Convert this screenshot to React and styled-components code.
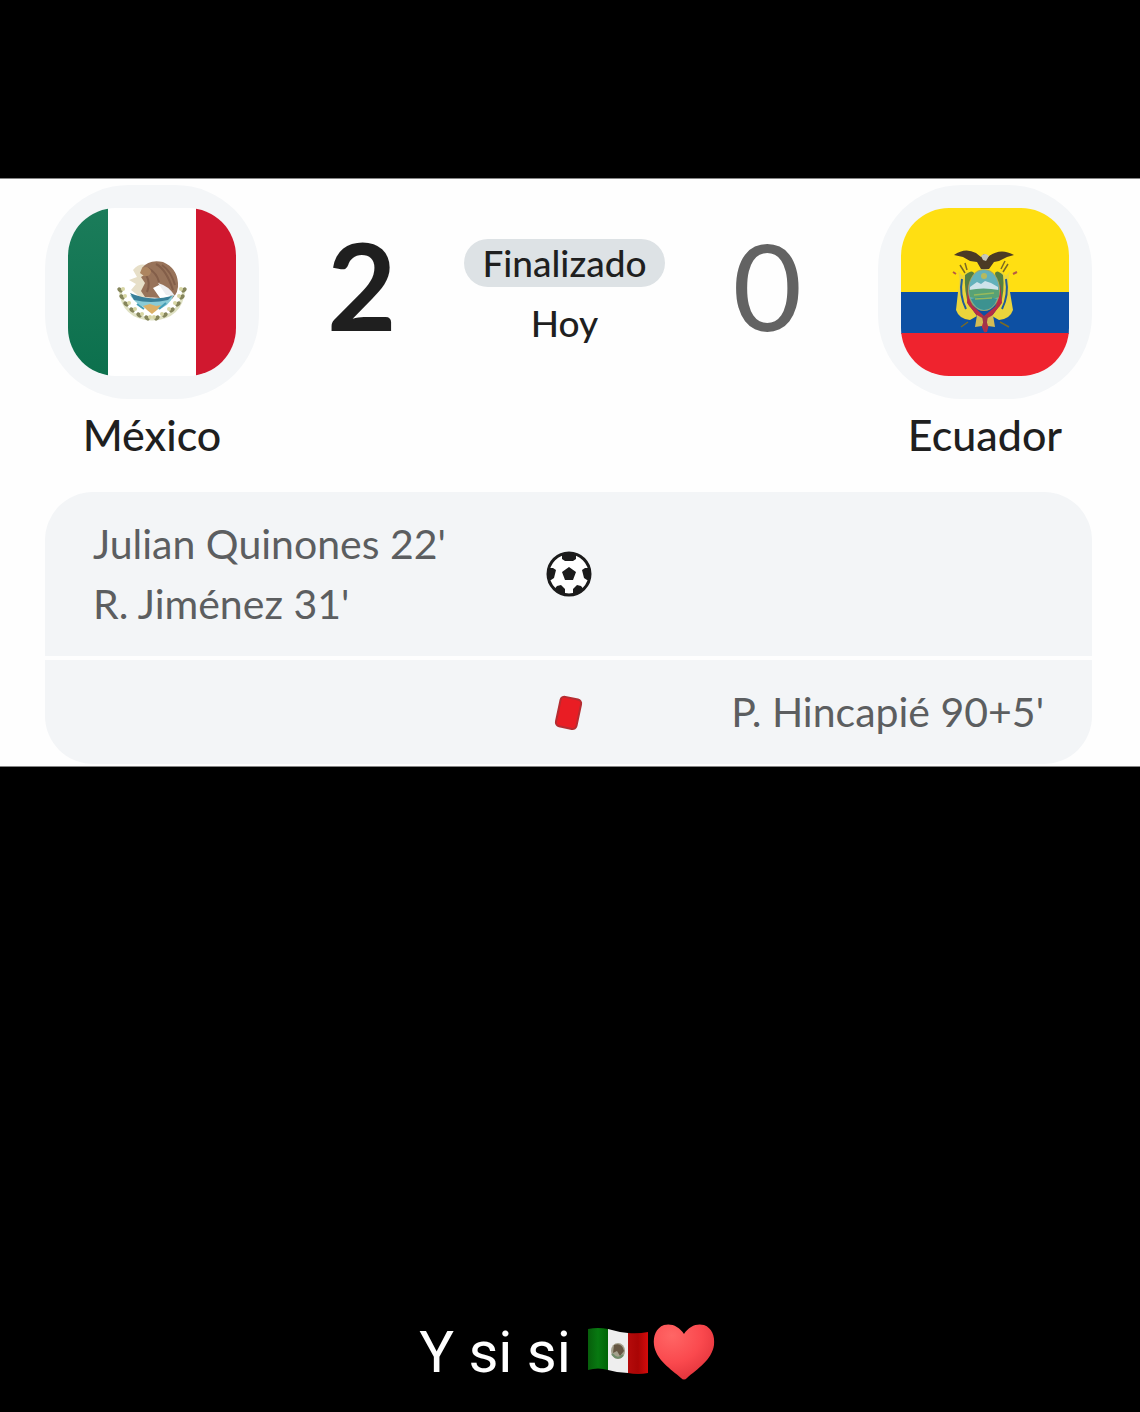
import React from "react";
import styled, { createGlobalStyle } from "styled-components";

const GlobalStyle = createGlobalStyle`
  * { box-sizing: border-box; }
  body { margin: 0; background: #000; }
`;

const Page = styled.main`
  min-height: 100vh;
  display: flex;
  flex-direction: column;
  justify-content: space-between;
  padding: 178px 0 26px;
  background: #000;
  font-family: Lato, "Open Sans", sans-serif;
`;

const Panel = styled.article`
  padding: 6px 48px 2px 45px;
  background: #fefefe;
  border: solid #858585;
  border-width: 1px 0;
`;

const Scoreboard = styled.header`
  display: flex;
  align-items: flex-start;
`;

const Team = styled.section`
  width: 214px;
  display: flex;
  flex-direction: column;
  align-items: center;
`;

const Badge = styled.div`
  width: 214px;
  height: 214px;
  padding: 23px;
  border-radius: 84px;
  background: #f4f6f8;
  svg {
    display: block;
    width: 168px;
    height: 168px;
    border-radius: 48px;
  }
`;

const TeamName = styled.h2`
  margin: 8px 0 0;
  font-size: 43px;
  line-height: 56px;
  font-weight: 500;
  color: #1f1f1f;
`;

const Result = styled.div`
  flex: 1;
  display: flex;
  justify-content: space-between;
  align-items: flex-start;
  padding: 46px 76px 0 68px;
`;

const Score = styled.span`
  font-size: 120px;
  line-height: 108px;
  font-weight: ${(p) => (p.$winner ? 700 : 400)};
  color: ${(p) => (p.$winner ? "#1f1f1f" : "#636363")};
`;

const Status = styled.div`
  display: flex;
  flex-direction: column;
  align-items: center;
  gap: 12px;
  padding-top: 8px;
  font-size: 37px;
  line-height: 48px;
  font-weight: 500;
  color: #1f1f1f;
`;

const Pill = styled.span`
  padding: 0 18px;
  border-radius: 24px;
  background: #dde2e5;
`;

const Events = styled.div`
  display: flex;
  flex-direction: column;
  gap: 4px;
  margin-top: 29px;
  border-radius: 48px;
  overflow: hidden;
`;

const EventRow = styled.section`
  display: grid;
  grid-template-columns: 1fr 46px 1fr;
  align-items: center;
  padding: 22px 48px;
  background: #f3f5f7;
`;

const EventList = styled.ul`
  margin: 0;
  padding: 0;
  list-style: none;
  font-size: 41px;
  line-height: 60px;
  color: #5c5e60;
  text-align: ${(p) => (p.$away ? "right" : "left")};
`;

const EventIcon = styled.svg`
  display: block;
  width: 46px;
  height: 46px;
`;

const Caption = styled.p`
  display: flex;
  justify-content: center;
  align-items: center;
  margin: 0;
  padding-right: 6px;
  font-family: Roboto, sans-serif;
  font-size: 58px;
  line-height: 68px;
  color: #fff;
`;

const Emoji = styled.svg`
  width: 62px;
  height: 58px;
  margin-left: ${(p) => (p.$spaced ? 16 : 4)}px;
`;

const leaves = [
  [52, 82], [54, 89], [58, 96], [64, 102], [71, 107], [79, 110],
  [89, 110], [97, 107], [104, 102], [110, 96], [114, 89], [116, 82],
];

function MexicoFlag() {
  return (
    <svg viewBox="0 0 168 168" role="img" aria-label="Bandera de México">
      <defs>
        <linearGradient id="green" x2="0" y2="1">
          <stop offset="0" stopColor="#1b7c5a" />
          <stop offset="1" stopColor="#0c704d" />
        </linearGradient>
      </defs>
      <rect width="168" height="168" fill="#fff" />
      <rect width="40" height="168" fill="url(#green)" />
      <rect x="128" width="40" height="168" fill="#d0182f" />
      <path d="M52 81Q55 110 84 111Q113 110 116 81" fill="none" stroke="#dfe1c4" strokeWidth="3" />
      {leaves.map(([x, y]) => (
        <g key={x}>
          <ellipse cx={x} cy={y} rx="3" ry="2" fill="#85855b" transform={`rotate(${x < 84 ? 42 : -42} ${x} ${y})`} />
          <circle cx={x + (x < 84 ? 3 : -3)} cy={y - 1} r="2" fill="#d7d6a5" />
        </g>
      ))}
      <path d="M65 62Q71 55 78 57L75 66L82 69L76 81L84 90L72 89L63 82L68 76L61 72L69 69Z" fill="#e7dfc8" />
      <path d="M74 60Q81 51 95 54Q109 60 110 75Q111 84 104 91Q101 82 91 77L85 80L92 90L77 89L73 83L77 75L73 69L78 66Z" fill="#98735a" />
      <path d="M88 56Q98 61 105 82M94 57Q103 63 107 77M80 60Q89 65 91 74M78 67Q83 75 79 84" fill="none" stroke="#835e49" strokeWidth="2" />
      <path d="M74 60Q80 57 83 63Q83 69 76 68L72 65Z" fill="#ad8560" />
      <path d="M90 75Q101 78 107 88L98 87Z" fill="#eeeef0" />
      <path d="M62 87Q84 96 106 87Q101 99 88 102Q71 101 62 87Z" fill="#8acbd6" />
      <path d="M62 85Q82 94 104 88L100 92Q83 96 66 92Z" fill="#397f98" />
      <path d="M75 98L82 96L88 98L93 97L89 102L84 106L79 102Z" fill="#dbb068" />
      <path d="M69 96L76 101M98 95L91 101" stroke="#459eb6" strokeWidth="2" />
    </svg>
  );
}

function EcuadorFlag() {
  return (
    <svg viewBox="0 0 168 168" role="img" aria-label="Bandera de Ecuador">
      <rect width="168" height="84" fill="#ffdf12" />
      <rect y="84" width="168" height="42" fill="#0d50a3" />
      <rect y="125" width="168" height="43" fill="#ef232e" />
      <path d="M64 65L59 57M66 62L64 55M102 64L107 56M100 61L104 53M67 114L60 119M99 114L108 119" stroke="#7b6a24" strokeWidth="1.5" />
      <path d="M55 66L52 64M112 66L116 64" stroke="#b75c43" strokeWidth="2" />
      <path d="M57 63Q60 71 57 84L55 102Q58 111 69 112L76 108L69 98L65 74L68 62L62 68Z" fill="#ead43c" />
      <path d="M109 63Q106 71 109 84L112 102Q109 111 98 112L91 108L98 98L102 74L99 62L105 68Z" fill="#ead43c" />
      <path d="M61 71Q58 87 65 101M105 71Q108 87 101 101" fill="none" stroke="#235b97" strokeWidth="2" />
      <path d="M64 67Q71 61 73 65L70 91L75 104L68 98Q63 84 64 67M102 67Q96 61 94 65L97 91L92 104L99 98Q104 84 102 67" fill="#557f42" />
      <path d="M67 75L66 95L77 109L83 124H86L90 109L101 95L99 75L95 98L83 108L71 97Z" fill="#b52d46" />
      <path d="M76 107L83 111L81 118L74 119L75 113ZM92 107L85 111L87 118L94 119L93 113Z" fill="#d3bc55" />
      <path d="M81 108L84 126L87 108Z" fill="#9e354b" />
      <path d="M53 47Q64 39 75 45L80 49L83 46L87 49Q99 39 113 47L106 49L98 53L93 54L88 61L80 61L76 54L69 53L62 49Z" fill="#4b3a25" />
      <path d="M80 48Q84 44 88 48L85 53L82 52Z" fill="#c8c8ba" />
      <ellipse cx="83" cy="82" rx="16" ry="21" fill="#a6a563" />
      <ellipse cx="83" cy="82" rx="15" ry="20" fill="#63b1bb" />
      <path d="M69 79L76 74L80 76L84 73L90 75L97 79V83H69Z" fill="#cfe3ea" />
      <path d="M68 82Q82 79 98 82V89Q85 94 69 89Z" fill="#58a275" />
      <path d="M70 91Q83 87 96 91Q92 102 83 102Q74 101 70 91Z" fill="#3c9290" />
      <path d="M73 87L93 85M74 91L91 90" stroke="#98b95c" strokeWidth="1.5" />
      <circle cx="83" cy="68" r="3" fill="#b5ba5f" />
    </svg>
  );
}

function BallIcon() {
  return (
    <EventIcon viewBox="0 0 46 46" role="img" aria-label="Goles">
      <defs><clipPath id="ball"><circle cx="23" cy="23" r="21" /></clipPath></defs>
      <circle cx="23" cy="23" r="21" fill="#fff" />
      <path clipPath="url(#ball)" fill="#1b1b1b" d="M16 0H30V8L27 10H19L16 8ZM0 17L7 17L10 19L8 27L5 29H0ZM46 17H39L36 19L38 27L41 29H46ZM7 40L11 35L15 34L19 38V46H8ZM39 40L35 35L31 34L27 38V46H38ZM23 16L30 21L27 29H19L16 21Z" />
      <circle cx="23" cy="23" r="21" fill="none" stroke="#1b1b1b" strokeWidth="3" />
    </EventIcon>
  );
}

function CardIcon() {
  return (
    <EventIcon viewBox="0 0 46 46" role="img" aria-label="Tarjeta roja">
      <rect x="12" y="9" width="21" height="30" rx="4" transform="rotate(12 23 24)" fill="#e91d24" stroke="#b52d32" strokeWidth="2" />
    </EventIcon>
  );
}

function FlagEmoji() {
  return (
    <Emoji $spaced viewBox="0 0 62 58" role="img" aria-label="México">
      <defs>
        <linearGradient id="flagGreen"><stop stopColor="#075e0b" /><stop offset=".5" stopColor="#087911" /><stop offset="1" stopColor="#006404" /></linearGradient>
        <linearGradient id="flagRed"><stop stopColor="#b50b0b" /><stop offset=".5" stopColor="#a90505" /><stop offset="1" stopColor="#d50b0b" /></linearGradient>
      </defs>
      <path d="M1 6Q11 4 21 6V47Q11 44 1 47Z" fill="url(#flagGreen)" />
      <path d="M21 6Q31 9 41 10V50Q31 50 21 47Z" fill="#eee" />
      <path d="M41 10Q51 11 61 9V50Q51 52 41 50Z" fill="url(#flagRed)" />
      <ellipse cx="31" cy="28" rx="7" ry="8" fill="#a4a08c" />
      <path d="M27 22Q35 19 37 28L33 33L30 28L26 30Z" fill="#665743" />
      <path d="M25 31Q31 38 36 32" fill="none" stroke="#708d6a" strokeWidth="2" />
    </Emoji>
  );
}

function HeartEmoji() {
  return (
    <Emoji viewBox="0 0 62 58" role="img" aria-label="Corazón">
      <defs>
        <radialGradient id="heart" cx=".3" cy=".2" r=".9">
          <stop stopColor="#ff6665" /><stop offset=".55" stopColor="#fa494e" /><stop offset="1" stopColor="#df3038" />
        </radialGradient>
      </defs>
      <path d="M31 11C26 3 18 0 11 2C3 5 0 13 1 22C3 37 18 46 28 55Q31 58 34 55C44 46 59 37 61 22C62 13 59 5 51 2C44 0 36 3 31 11Z" fill="url(#heart)" />
    </Emoji>
  );
}

export default function App() {
  return (
    <>
      <GlobalStyle />
      <Page>
        <Panel>
          <Scoreboard>
            <Team>
              <Badge><MexicoFlag /></Badge>
              <TeamName>México</TeamName>
            </Team>
            <Result>
              <Score $winner>2</Score>
              <Status>
                <Pill>Finalizado</Pill>
                <span>Hoy</span>
              </Status>
              <Score>0</Score>
            </Result>
            <Team>
              <Badge><EcuadorFlag /></Badge>
              <TeamName>Ecuador</TeamName>
            </Team>
          </Scoreboard>
          <Events>
            <EventRow>
              <EventList>
                <li>Julian Quinones 22'</li>
                <li>R. Jiménez 31'</li>
              </EventList>
              <BallIcon />
            </EventRow>
            <EventRow>
              <span />
              <CardIcon />
              <EventList $away>
                <li>P. Hincapié 90+5'</li>
              </EventList>
            </EventRow>
          </Events>
        </Panel>
        <Caption>
          Y si si
          <FlagEmoji />
          <HeartEmoji />
        </Caption>
      </Page>
    </>
  );
}
